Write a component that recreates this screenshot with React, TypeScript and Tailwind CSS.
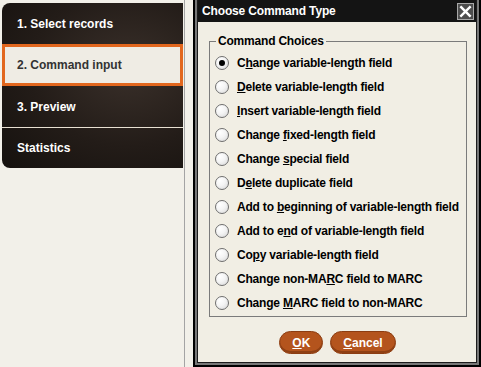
import React from "react";

const steps = [
  { label: "1. Select records", active: false },
  { label: "2. Command input", active: true },
  { label: "3. Preview", active: false },
  { label: "Statistics", active: false },
];

// [before, underlined letter, after]
const choices: [string, string, string][] = [
  ["C", "h", "ange variable-length field"],
  ["", "D", "elete variable-length field"],
  ["", "I", "nsert variable-length field"],
  ["Change ", "f", "ixed-length field"],
  ["Change ", "s", "pecial field"],
  ["D", "e", "lete duplicate field"],
  ["Add to ", "b", "eginning of variable-length field"],
  ["Add to e", "n", "d of variable-length field"],
  ["Co", "p", "y variable-length field"],
  ["Change non-MA", "R", "C field to MARC"],
  ["Change ", "M", "ARC field to non-MARC"],
];

function Radio({ checked }: { checked: boolean }) {
  return (
    <span className="w-[14px] h-[14px] rounded-full border border-[#6f6f6f] bg-[radial-gradient(circle_at_35%_30%,#ffffff_0%,#f4f4f4_45%,#d6d6d6_100%)] flex items-center justify-center shrink-0">
      {checked && <span className="w-[6px] h-[6px] rounded-full bg-black" />}
    </span>
  );
}

function Sidebar() {
  return (
    <div className="w-[185px] h-full border-r border-[#a4a4a4] pt-[3px] pl-[2px]">
      <div className="w-[181px] rounded-l-[8px] overflow-hidden bg-[radial-gradient(ellipse_at_70%_40%,#3a302a_0%,#231c18_55%,#15110e_100%)]">
        {steps.map((s, i) =>
          s.active ? (
            <div
              key={s.label}
              className="h-[42px] border-[3px] border-[#e2671e] bg-[#efece4] flex items-center pl-[12px] text-[12px] font-bold text-[#333333]"
            >
              {s.label}
            </div>
          ) : (
            <div
              key={s.label}
              className={`h-[41px] flex items-center pl-[15px] text-[12px] font-bold text-white ${
                i === 3 ? "border-t border-[#e8e0d2]" : ""
              } ${i === 0 ? "h-[40px]" : ""}`}
            >
              {s.label}
            </div>
          )
        )}
      </div>
    </div>
  );
}

function Dialog() {
  return (
    <div className="ml-[8px] flex-1 h-full border-x-2 border-b-2 border-black bg-[#777777] px-[2px] pb-[2px] flex flex-col">
      <div className="flex-1 border-x border-b border-[#1c1c1c] flex flex-col">
        <div className="h-[22px] bg-[#141414] flex items-center justify-between pl-[4px] pr-[2px]">
          <span className="text-white text-[12px] font-bold tracking-[-0.15px]">
            Choose Command Type
          </span>
          <span className="w-[17px] h-[17px] border border-[#a8a8a8] bg-[#4d4d4d] flex items-center justify-center">
            <svg width="13" height="13" viewBox="0 0 12 12">
              <path
                d="M2 2 L10 10 M10 2 L2 10"
                stroke="white"
                strokeWidth="2.2"
                strokeLinecap="square"
              />
            </svg>
          </span>
        </div>
        <div className="flex-1 bg-[#f1eee4] flex flex-col">
          <fieldset className="mt-[12px] ml-[11px] w-[258px] border border-[#7b7b7b] px-[5px] pt-[3px] pb-[1px]">
            <legend className="ml-[1px] px-[2px] text-[12px] leading-[14px] font-bold text-black tracking-[-0.2px]">
              Command Choices
            </legend>
            {choices.map(([a, u, b], i) => (
              <div key={i} className="h-[24px] flex items-center gap-[8px]">
                <Radio checked={i === 0} />
                <span className="text-[12px] font-bold text-black tracking-[-0.2px] whitespace-nowrap">
                  {a}
                  <span className="underline">{u}</span>
                  {b}
                </span>
              </div>
            ))}
          </fieldset>
          <div className="mt-[14px] flex justify-center gap-[7px] pl-[1px]">
            <button className="h-[23px] px-[12px] rounded-full bg-[#b4541d] border border-[#8c3d12] shadow-[inset_0_-2px_0_#8f4014] text-white text-[12px] font-bold">
              <span className="underline">O</span>K
            </button>
            <button className="h-[23px] px-[12px] rounded-full bg-[#b4541d] border border-[#8c3d12] shadow-[inset_0_-2px_0_#8f4014] text-white text-[12px] font-bold">
              <span className="underline">C</span>ancel
            </button>
          </div>
        </div>
      </div>
    </div>
  );
}

export default function App() {
  return (
    <div className="w-[481px] h-[367px] bg-[#f2f0e9] flex overflow-hidden font-['Liberation_Sans',Arial,sans-serif]">
      <Sidebar />
      <Dialog />
    </div>
  );
}
